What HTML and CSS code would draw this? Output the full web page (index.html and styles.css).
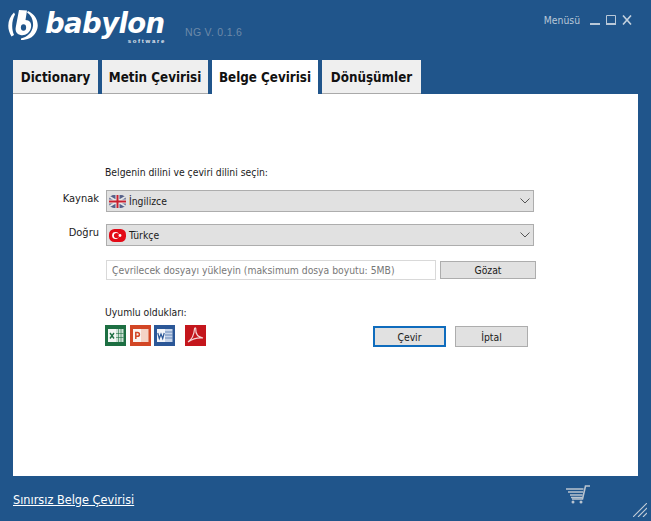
FILE: index.html
```html
<!DOCTYPE html>
<html lang="tr">
<head>
    <meta charset="UTF-8">
    <meta name="viewport" content="width=device-width, initial-scale=1.0">
    <title>Babylon NG</title>
    <link rel="stylesheet" href="styles.css">
</head>
<body>
    <div class="app-window">
        <div class="title-bar">
            <div class="logo">
                <svg class="logo-icon" width="32" height="32" viewBox="0 0 32 32">
                    <path d="M7 3.500 C1 9 -1 19 4.500 27.500 L7 26 C4 19 5 11 8 5.500 Z" fill="#fff"/>
                    <path d="M21 2 C30 6 33 16 29 23 C26 29 20 31 14 31 L14 29.500 C20 28 25 24 26 17 C26.500 11 24 6 20 3.500 Z" fill="#fff"/>
                    <path d="M12 1 L20 1.500 L18.500 11 C22.500 11 25 14 24 18.500 C23 24 18 27 13.500 26 C9.500 25 8 22 8.800 18 Z" fill="#fff"/>
                    <ellipse cx="16.500" cy="18.500" rx="2.600" ry="3.200" fill="#20558b"/>
                </svg>
                <div class="logo-text">
                    <div class="logo-name">babylon</div>
                    <div class="logo-sub">software</div>
                </div>
            </div>
            <div class="version">NG V. 0.1.6</div>
            <div class="window-controls">
                <span class="menu-label">Menüsü</span>
                <svg width="10" height="10" viewBox="0 0 10 10"><rect x="0" y="8" width="10" height="2" fill="#b9c8d8"/></svg>
                <svg width="10" height="10" viewBox="0 0 10 10"><path d="M.5.500h9v9h-9z" fill="none" stroke="#b9c8d8"/><rect x="0" y="8" width="10" height="2" fill="#b9c8d8"/></svg>
                <svg width="10" height="10" viewBox="0 0 10 10"><path d="M1 .500L9 9.500M9 .500L1 9.500" fill="none" stroke="#c4d1de" stroke-width="1.600"/></svg>
            </div>
        </div>

        <div class="tabs">
            <div class="tab tab-dictionary">Dictionary</div>
            <div class="tab tab-metin">Metin Çevirisi</div>
            <div class="tab tab-belge active">Belge Çevirisi</div>
            <div class="tab tab-donusum">Dönüşümler</div>
        </div>

        <div class="panel">
            <div class="form-heading">Belgenin dilini ve çeviri dilini seçin:</div>

            <div class="form-row">
                <div class="row-label">Kaynak</div>
                <div class="select-box">
                    <svg class="flag" width="17" height="13" viewBox="0 0 17 13">
                        <rect width="17" height="13" rx="5" fill="#56618a"/>
                        <path d="M1 2L16 11M16 2L1 11" stroke="#e6e6e6" stroke-width="2"/>
                        <path d="M8.500 0V13M0 6.500H17" stroke="#ececec" stroke-width="4"/>
                        <path d="M8.500 0V13M0 6.500H17" stroke="#c8202f" stroke-width="2"/>
                    </svg>
                    <span>İngilizce</span>
                    <svg class="chevron" width="10" height="6" viewBox="0 0 10 6"><path d="M.5.500L5 5L9.500.500" fill="none" stroke="#555"/></svg>
                </div>
            </div>

            <div class="form-row">
                <div class="row-label">Doğru</div>
                <div class="select-box">
                    <svg class="flag" width="17" height="13" viewBox="0 0 17 13">
                        <rect width="17" height="13" rx="5.500" fill="#e30a17"/>
                        <circle cx="6.500" cy="6.500" r="3.400" fill="#fff"/>
                        <circle cx="7.500" cy="6.500" r="2.600" fill="#e30a17"/>
                        <circle cx="11" cy="6.500" r="1.400" fill="#fff"/>
                    </svg>
                    <span>Türkçe</span>
                    <svg class="chevron" width="10" height="6" viewBox="0 0 10 6"><path d="M.5.500L5 5L9.500.500" fill="none" stroke="#555"/></svg>
                </div>
            </div>

            <div class="file-row">
                <div class="file-input">Çevrilecek dosyayı yükleyin (maksimum dosya boyutu: 5MB)</div>
                <button class="btn btn-browse">Gözat</button>
            </div>

            <div class="bottom-row">
                <div class="compat">
                    <div class="compat-title">Uyumlu oldukları:</div>
                    <div class="compat-icons">
                        <svg width="21" height="21" viewBox="0 0 21 21">
                            <rect width="21" height="21" fill="#1d6f42"/>
                            <rect x="11" y="4" width="7.500" height="13" fill="#cfe3d7"/>
                            <path d="M13.500 4V17M16 4V17M11 8.500H18.500M11 12.500H18.500" stroke="#1d6f42" stroke-width=".6"/>
                            <rect x="3" y="4" width="8" height="13" fill="#f4f7f5"/>
                            <path d="M5 8L9 13.500M9 8L5 13.500" stroke="#1d6f42" stroke-width="1.400"/>
                        </svg>
                        <svg width="21" height="21" viewBox="0 0 21 21">
                            <rect width="21" height="21" fill="#d24625"/>
                            <rect x="11" y="4" width="7.500" height="13" fill="#f4d3c6"/>
                            <rect x="3" y="4" width="8" height="13" fill="#f9f3f0"/>
                            <path d="M5.800 14V7.500H7.500a1.700 1.700 0 0 1 0 3.800H5.800" fill="none" stroke="#d24625" stroke-width="1.500"/>
                        </svg>
                        <svg width="21" height="21" viewBox="0 0 21 21">
                            <rect width="21" height="21" fill="#2b5797"/>
                            <rect x="11" y="4" width="7.500" height="13" fill="#c7d5ea"/>
                            <path d="M11 7H18.500M11 10H18.500M11 13H18.500" stroke="#2b5797" stroke-width=".6"/>
                            <rect x="3" y="4" width="8" height="13" fill="#f3f5f9"/>
                            <path d="M3.800 8L5.300 13.500L7 9L8.700 13.500L10.200 8" fill="none" stroke="#2b5797" stroke-width="1.200"/>
                        </svg>
                        <svg class="pdf-icon" width="21" height="21" viewBox="0 0 21 21">
                            <rect width="21" height="21" fill="#c4161c"/>
                            <path d="M3 17C6 15 9 10 9.500 4C9.700 2.500 11 2.500 10.800 4.500C10.500 9 13 12 18 13C14 12.600 8 13.500 3 17Z" fill="none" stroke="#f5d5d5" stroke-width="1.200"/>
                        </svg>
                    </div>
                </div>
                <div class="actions">
                    <button class="btn btn-action btn-default">Çevir</button>
                    <button class="btn btn-action">İptal</button>
                </div>
            </div>
        </div>

        <div class="footer">
            <a class="footer-link" href="#">Sınırsız Belge Çevirisi</a>
            <svg class="cart" width="24" height="19" viewBox="0 0 24 19">
                <path d="M24 1H19.500L16.500 14H6" fill="none" stroke="#b9c4d0" stroke-width="1.600"/>
                <path d="M0 4H17.500M2 7H17M4 10H16.500M5 12.500H16" stroke="#b9c4d0" stroke-width="1.700"/>
                <circle cx="7" cy="17" r="1.500" fill="#b9c4d0"/>
                <circle cx="15" cy="17" r="1.500" fill="#b9c4d0"/>
            </svg>
        </div>

        <svg class="resize-grip" width="14" height="14" viewBox="0 0 14 14">
            <path d="M0 14L14 0M5 14L14 5M10 14L14 10" stroke="#c2cdd9" stroke-width="1.100"/>
        </svg>
    </div>
</body>
</html>
```

FILE: styles.css
```css
body {
    margin: 0;
    padding: 0;
    background: #20558b;
    font-family: "DejaVu Sans Condensed", "DejaVu Sans", sans-serif;
    font-size: 10.300px;
    color: #1a1a1a;
    overflow: hidden;
}

.app-window {
    width: 651px;
    height: 521px;
    position: relative;
    background: #20558b;
    display: flex;
    flex-direction: column;
}

.title-bar {
    height: 60px;
    display: flex;
    align-items: flex-start;
    padding: 0 19px 0 7px;
    box-sizing: border-box;
}

.logo {
    display: flex;
    gap: 6px;
    padding-top: 9px;
    width: 178px;
}

.logo-text {
    width: 121px;
}

.logo-name {
    font-family: "DejaVu Sans", sans-serif;
    font-size: 27.500px;
    font-weight: bold;
    font-style: italic;
    line-height: 29px;
    color: #fff;
    letter-spacing: -0.6px;
}

.logo-sub {
    font-family: "Liberation Sans", sans-serif;
    font-size: 6px;
    font-weight: bold;
    line-height: 6px;
    letter-spacing: 1.7px;
    color: #e4eaf1;
    text-align: right;
}

.version {
    font-family: "Liberation Sans", sans-serif;
    font-size: 10.500px;
    letter-spacing: 0.3px;
    color: #6d8aa9;
    padding-top: 26px;
}

.window-controls {
    margin-left: auto;
    display: flex;
    align-items: center;
    gap: 6px;
    padding-top: 14px;
    color: #b9c8d8;
}

.menu-label {
    margin-right: 4px;
}

.tabs {
    height: 34px;
    display: flex;
    gap: 4px;
    padding-left: 13px;
}

.tab {
    background: #efefef;
    border-bottom: 1px solid #a9a9a9;
    box-sizing: border-box;
    font-size: 13.300px;
    font-weight: bold;
    line-height: 35px;
    text-align: center;
    color: #111;
}

.tab-dictionary { width: 85px; }
.tab-metin { width: 106px; }
.tab-belge { width: 106px; }
.tab-donusum { width: 99px; }

.tab.active {
    background: #fff;
    border-bottom: 0;
}

.panel {
    height: 382px;
    width: 625px;
    margin-left: 13px;
    box-sizing: border-box;
    background: #fff;
    padding-top: 71px;
}

.form-heading {
    margin-left: 92px;
    height: 25px;
    line-height: 14px;
}

.form-row {
    display: flex;
    align-items: flex-start;
    height: 34px;
}

.row-label {
    width: 86px;
    text-align: right;
    font-size: 11px;
    line-height: 18px;
}

.select-box {
    width: 428px;
    height: 22px;
    margin-left: 7px;
    box-sizing: border-box;
    background: #e1e1e1;
    border: 1px solid #adadad;
    display: flex;
    align-items: center;
    gap: 3px;
    padding-left: 2px;
}

.chevron {
    margin-left: auto;
    margin-right: 3px;
}

.file-row {
    display: flex;
    align-items: center;
    gap: 4px;
    margin: 2px 0 0 93px;
    height: 20px;
}

.file-input {
    width: 330px;
    height: 20px;
    box-sizing: border-box;
    border: 1px solid #d9d9d9;
    padding-left: 5px;
    line-height: 18px;
    color: #777;
}

.btn {
    font-family: inherit;
    font-size: 10.300px;
    color: #1a1a1a;
    background: #e1e1e1;
    border: 1px solid #adadad;
    padding: 0;
    box-sizing: border-box;
}

.btn-browse {
    width: 96px;
    height: 18px;
}

.bottom-row {
    display: flex;
    justify-content: space-between;
    align-items: flex-end;
    margin: 25px 110px 0 92px;
}

.compat-title {
    height: 20px;
    line-height: 14px;
}

.compat-icons {
    display: flex;
    gap: 3.500px;
    height: 22px;
}

.pdf-icon {
    margin-left: 6px;
}

.actions {
    display: flex;
    gap: 9px;
}

.btn-action {
    width: 73px;
    height: 21px;
}

.btn-default {
    border: 2px solid #0f6cbd;
}

.footer {
    flex: 1;
    display: flex;
    align-items: flex-start;
    justify-content: space-between;
    padding: 9px 61px 0 13px;
}

.footer-link {
    color: #fff;
    font-size: 12.600px;
    line-height: 30px;
}

.resize-grip {
    position: absolute;
    right: 4px;
    bottom: 4px;
}
```
